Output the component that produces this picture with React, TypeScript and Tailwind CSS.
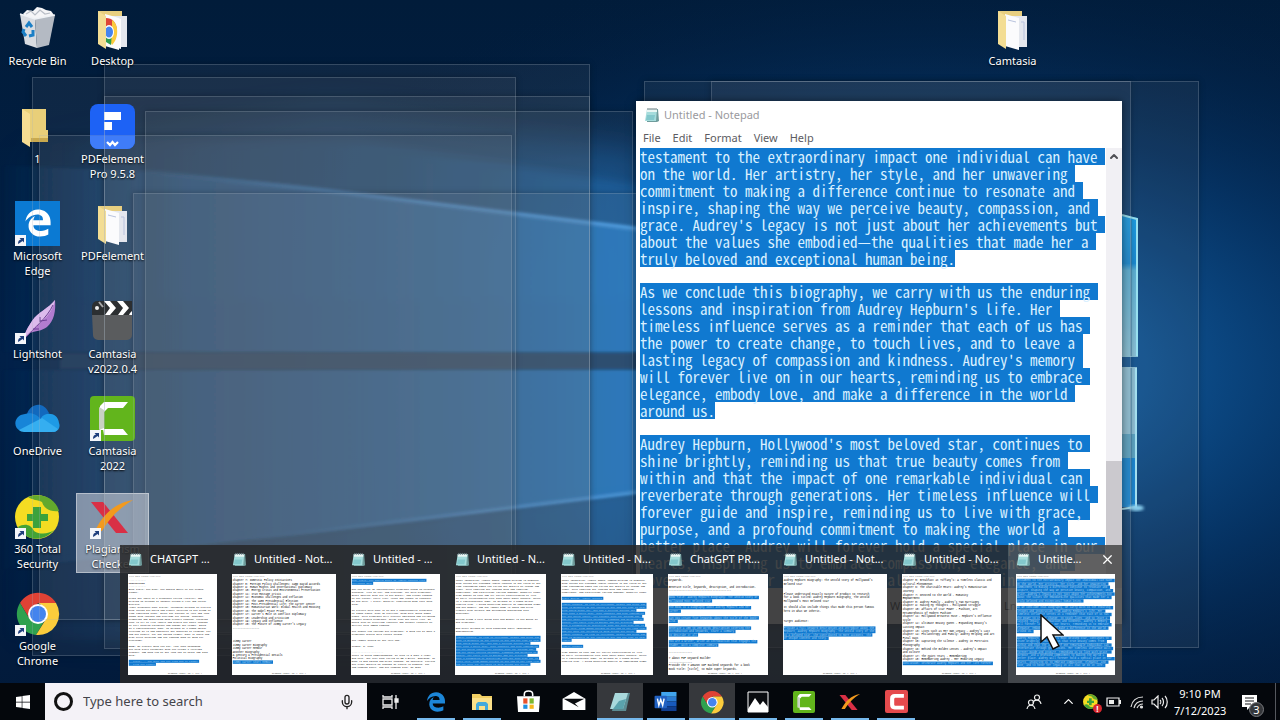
import React, { useState } from 'react'
import { FaEdgeLegacy, FaWindows } from 'react-icons/fa6'
import { ChevronUp, Mic, X } from 'lucide-react'

/* ---------- Icons ---------- */

const Shortcut = () => (
  <g>
    <rect x="0" y="34" width="11" height="11" fill="#f4f6fa" />
    <path d="M3 43c0-3 1-4 3-4.500L4.500 37H9v4.500L7.600 40C6 41 5 42 3 43z" fill="#1f3f7c" />
  </g>
)

const RecycleIcon = () => (
  <svg viewBox="0 0 45 45" className="size-[45px]">
    <path d="M8 8l4-4 6 1 4-4 5 1 4 2 5 1 3 4-8 5H12z" fill="#f5f5f7" />
    <path d="M11 8l5-3 4 4 5-5 5 4 5-1" stroke="#b9bec6" strokeWidth="1.200" fill="none" />
    <path d="M5 8l15 5 2 29L10 38z" fill="#d9dce1" />
    <path d="M20 13l20-4-6 30-12 3z" fill="#b4bac3" />
    <path d="M5 8l15 5 20-4" stroke="#eef1f5" strokeWidth="1.500" fill="none" />
    <path d="M11 21l3-4 3 4M18 24l0 5-4 1M11 30l-3-4 1-3" stroke="#1b7fc6" strokeWidth="3" fill="none" />
  </svg>
)

const FolderIcon: React.FC<{ kind?: 'plain' | 'papers' | 'chrome' }> = ({ kind = 'plain' }) => (
  <svg viewBox="0 0 45 45" className="size-[45px]">
    {kind === 'plain' ? (
      <>
        <path d="M7 5h24v21h2v12H7z" fill="#e9cf79" />
        <path d="M16 34h17v4H16z" fill="#c9a94e" />
        <path d="M7 5l8 5v33l-8-5z" fill="#f6dd93" />
      </>
    ) : (
      <>
        <path d="M8 5h24v33H8z" fill="#e8cf80" />
        <path d="M20 10h17v31H20z" fill="#e4e7ee" />
        <path d="M15 8l14 4v32l-14-4z" fill="#fbfbfd" />
        {kind === 'chrome' ? (
          <g>
            <path d="M16 12c6 0 11 4 11 14H16z" fill="#dd4437" />
            <path d="M22 14c7 4 7 19 0 25l-4-8 4-5z" fill="#fbcb3c" />
            <path d="M16 26h6l-1 13-5-3z" fill="#2e9c4d" />
            <ellipse cx="19" cy="26" rx="5" ry="7" fill="#fff" />
            <ellipse cx="19" cy="26" rx="4" ry="5.500" fill="#4584ee" />
            <path d="M28 12l3 1v30l-3-1z" fill="#fbfbfd" />
          </g>
        ) : (
          <path d="M18 14l8 2M31 16h3v18" stroke="#b9c3de" strokeWidth="1" fill="none" />
        )}
        <path d="M8 5l8 5v33l-8-5z" fill="#f3dd94" />
      </>
    )}
  </svg>
)

const PdfElementIcon = () => (
  <svg viewBox="0 0 45 45" className="size-[45px]">
    <rect width="45" height="45" rx="8" fill="#1d62f5" />
    <path d="M0 32h45v5a8 8 0 0 1-8 8H8a8 8 0 0 1-8-8z" fill="#3f7cf8" />
    <path d="M14 8h17v8H14zM14 18h8v8h-8z" fill="#fff" />
    <path d="M17 38l3 3 2.500-3 2.500 3 3-3" stroke="#fff" strokeWidth="2.200" fill="none" />
  </svg>
)

const EdgeTileIcon = () => (
  <svg viewBox="0 0 45 45" className="size-[45px]">
    <rect width="45" height="45" fill="#0b7ad3" />
    <FaEdgeLegacy x={9} y={8} size={28} color="#fff" />
    <Shortcut />
  </svg>
)

const LightshotIcon = () => (
  <svg viewBox="0 0 45 45" className="size-[45px]">
    <path d="M40 1c1 11-1 21-8 27-5 4-12 4-17 6l-7 7c2-8 5-13 9-19C23 13 34 9 40 1z" fill="#b27ccf" />
    <path d="M40 1c-2 11-9 18-17 25L8 41c2-8 5-13 9-19C23 13 34 9 40 1z" fill="#dcbbec" />
    <path d="M38 6C32 19 20 28 9 40M25 18v5M32 21l-7 1M24 30l-6 0" stroke="#6d3f94" strokeWidth="1" fill="none" />
    <Shortcut />
  </svg>
)

const ClapperIcon = () => (
  <svg viewBox="0 0 45 45" className="size-[45px]">
    <path d="M2 15h40v21a5 5 0 0 1-5 5H8a5 5 0 0 1-5-5z" fill="#5a5c5e" />
    <path d="M2 7a6 6 0 0 1 6-5h34v14H2z" fill="#2c2f31" />
    <path d="M14 2h6l6 7-6 7h-5l5-7zM27 2h6l6 7-6 7h-5l5-7zM40 14l2-2v4h-3z" fill="#fff" />
    <circle cx="7" cy="9" r="2" fill="#eee" />
    <path d="M9 3l4 5" stroke="#aaa" strokeWidth="2" />
  </svg>
)

const OneDriveIcon = () => (
  <svg viewBox="0 0 45 45" className="size-[45px]">
    <path d="M12 18C15 8 28 4 34 17l-8 13H5z" fill="#1269bd" />
    <path d="M10 18c7-2 12 1 17 6L6 35C-3 32-1 19 10 18z" fill="#1785d8" />
    <path d="M26 22c5-7 17-5 18 5 2 5-2 9-6 9z" fill="#1e9ae5" />
    <path d="M27 22l16 11c-1 2-3 3-6 3H9c-2 0-4-1-5-2z" fill="#35aef0" />
  </svg>
)

const CamtasiaIcon: React.FC<{ red?: boolean; link?: boolean; className: string }> = ({ red, link, className }) => (
  <svg viewBox="0 0 45 45" className={className}>
    <rect width="45" height="45" rx="4" fill={red ? '#e54a4d' : '#62b51c'} />
    {red ? (
      <path d="M37 8v7H21c-2 0-3 1-3 3v10c0 2 1 3 3 3h16v7H19c-6 0-9-3-9-9V17c0-6 3-9 9-9z" fill="#fff" />
    ) : (
      <>
        <path d="M14 6h24l-5 6H18l-4 4v18h-4V10z" fill="#fff" />
        <path d="M9 11l5 3v18l-5 2z" fill="#c9d2c3" />
        <path d="M13 33h20l5 6H14z" fill="#fff" />
      </>
    )}
    {link && <Shortcut />}
  </svg>
)

const Security360Icon: React.FC<{ link?: boolean; className: string }> = ({ link, className }) => (
  <svg viewBox="0 0 45 45" className={className}>
    <circle cx="22" cy="23" r="22" fill="#f4dc22" />
    <path d="M13 3C27-2 41 5 44 17c-8 1-15-2-17-9-4-2-10-2-14-5z" fill="#63a92d" />
    <path d="M3 33c6-4 13-3 16 4 6 4 15 3 20-1C29 48 11 48 3 33z" fill="#43a336" />
    <path d="M18 13h8v7h7v7h-7v7h-8v-7h-6v-7h6z" fill="#3ca23c" />
    {link && <Shortcut />}
  </svg>
)

const CrossIcon: React.FC<{ link?: boolean; className: string }> = ({ link, className }) => (
  <svg viewBox="0 0 45 45" className={className}>
    <path d="M1 8h12l25 31H26z" fill="#d92f45" />
    <path d="M5 37C12 22 24 9 43 6 30 14 20 23 12 37z" fill="#f29a1e" />
    {link && <Shortcut />}
  </svg>
)

const ChromeIcon: React.FC<{ link?: boolean; className: string }> = ({ link, className }) => (
  <svg viewBox="0 0 45 45" className={className}>
    <path d="M5 12a21 21 0 0 1 36 0H23l-9 15z" fill="#df4235" />
    <path d="M5 12a21 21 0 0 0 16 32l10-17-8-5-9 5z" fill="#2fa14f" />
    <path d="M41 12a21 21 0 0 1-20 32l10-16c2-6 0-12-8-16z" fill="#fbcc3c" />
    <circle cx="23" cy="23" r="10" fill="#fff" />
    <circle cx="23" cy="23" r="8" fill="#4484ee" />
    {link && <Shortcut />}
  </svg>
)

const NotepadIcon: React.FC<{ className: string }> = ({ className }) => (
  <svg viewBox="0 0 16 16" className={className}>
    <path d="M3 2h11l1 12-2 1H3z" fill="#6f9c9c" />
    <path d="M3 2h10l-1 12H1z" fill="#a5dcdc" />
    <path d="M3 2h10v3H3z" fill="#e9f6f4" />
    <path d="M4 1v2M6 1v2M8 1v2M10 1v2M12 1v2" stroke="#647b80" strokeWidth="1" />
    <path d="M3 8h8l-1 5H2z" fill="#83c8cc" />
  </svg>
)

/* ---------- Desktop ---------- */

const desktopIcons = [
  { label: 'Recycle Bin', cell: 'col-start-1 row-start-1', icon: <RecycleIcon /> },
  { label: 'Desktop', cell: 'col-start-2 row-start-1', icon: <FolderIcon kind="chrome" /> },
  { label: 'Camtasia', cell: 'col-start-14 row-start-1', icon: <FolderIcon kind="papers" /> },
  { label: '1', cell: 'col-start-1 row-start-2', icon: <FolderIcon /> },
  { label: 'PDFelement Pro 9.5.8', cell: 'col-start-2 row-start-2', icon: <PdfElementIcon /> },
  { label: 'Microsoft Edge', cell: 'col-start-1 row-start-3', icon: <EdgeTileIcon /> },
  { label: 'PDFelement', cell: 'col-start-2 row-start-3', icon: <FolderIcon kind="papers" /> },
  { label: 'Lightshot', cell: 'col-start-1 row-start-4', icon: <LightshotIcon /> },
  { label: 'Camtasia v2022.0.4', cell: 'col-start-2 row-start-4', icon: <ClapperIcon /> },
  { label: 'OneDrive', cell: 'col-start-1 row-start-5', icon: <OneDriveIcon /> },
  { label: 'Camtasia 2022', cell: 'col-start-2 row-start-5', icon: <CamtasiaIcon link className="size-[45px]" /> },
  { label: '360 Total Security', cell: 'col-start-1 row-start-6', icon: <Security360Icon link className="size-[45px]" /> },
  { label: 'Plagiarism Checker', cell: 'col-start-2 row-start-6', icon: <CrossIcon link className="size-[45px]" />, selected: true },
  { label: 'Google Chrome', cell: 'col-start-1 row-start-7', icon: <ChromeIcon link className="size-[45px]" /> },
]

const Wallpaper = () => (
  <svg viewBox="0 0 1280 720" preserveAspectRatio="none" className="absolute inset-0 size-full" aria-hidden="true">
    <defs>
      <linearGradient id="sky" x1="0" y1="0" x2="0" y2="1">
        <stop offset="0" stopColor="#011c3a" />
        <stop offset="0.500" stopColor="#022048" />
        <stop offset="1" stopColor="#021a3a" />
      </linearGradient>
      <radialGradient id="glow" gradientUnits="userSpaceOnUse" cx="0" cy="0" r="1" gradientTransform="translate(940 370) scale(760 430)">
        <stop offset="0" stopColor="#1a80d6" />
        <stop offset="0.250" stopColor="#0f5596" />
        <stop offset="0.550" stopColor="#06376a" stopOpacity="0.800" />
        <stop offset="1" stopColor="#021c3c" stopOpacity="0" />
      </radialGradient>
      <linearGradient id="beam" x1="0" y1="0" x2="1" y2="0">
        <stop offset="0" stopColor="#174f88" stopOpacity="0" />
        <stop offset="0.300" stopColor="#1c5590" stopOpacity="0.800" />
        <stop offset="0.650" stopColor="#1f66aa" />
        <stop offset="1" stopColor="#1f80d6" />
      </linearGradient>
      <linearGradient id="edge" x1="0" y1="0" x2="1" y2="0">
        <stop offset="0" stopColor="#3d92dc" stopOpacity="0" />
        <stop offset="0.600" stopColor="#3d98f0" stopOpacity="0.900" />
        <stop offset="1" stopColor="#46a6f8" />
      </linearGradient>
      <linearGradient id="pane" x1="0" y1="0" x2="0" y2="1">
        <stop offset="0" stopColor="#12a0ee" />
        <stop offset="0.350" stopColor="#0f8ad8" />
        <stop offset="0.400" stopColor="#58b4dc" />
        <stop offset="1" stopColor="#8cc8e0" />
      </linearGradient>
      <filter id="soft"><feGaussianBlur stdDeviation="5" /></filter>
      <filter id="haze" x="-20%" y="-50%" width="140%" height="200%"><feGaussianBlur stdDeviation="16" /></filter>
      <filter id="slight"><feGaussianBlur stdDeviation="1.500" /></filter>
    </defs>
    <rect width="1280" height="720" fill="url(#sky)" />
    <rect width="1280" height="720" fill="url(#glow)" />
    <path d="M0 150L330 110L640 150V640H0z" fill="url(#beam)" opacity="0.350" filter="url(#haze)" />
    <path d="M60 140L360 140L640 186V300H60z" fill="url(#beam)" opacity="0.300" filter="url(#soft)" />
    <path d="M0 165L150 172L330 192L640 230V352H0z" fill="url(#beam)" opacity="0.850" filter="url(#slight)" />
    <path d="M0 370H640V492L330 530L0 570z" fill="url(#beam)" opacity="0.850" filter="url(#slight)" />
    <path d="M0 570L640 492V640H0z" fill="url(#beam)" opacity="0.250" filter="url(#soft)" />
    <path d="M120 168L330 191L640 229" stroke="url(#edge)" strokeWidth="4" fill="none" filter="url(#slight)" />
    <path d="M240 541L640 492" stroke="url(#edge)" strokeWidth="3" fill="none" filter="url(#slight)" />
    <path d="M60 353H640V369H60z" fill="#1c3a5e" opacity="0.700" filter="url(#slight)" />
    <path d="M1110 213L1138 218V357H1110z" fill="url(#pane)" />
    <path d="M1110 367H1137V507H1110z" fill="#92c8e0" />
    <path d="M1110 458H1137V507H1110z" fill="#1188dc" />
    <path d="M1110 434H1137V458H1110z" fill="#5aa9cc" />
    <path d="M1122 215L1137 219V356" stroke="#9deeff" strokeWidth="2" fill="none" />
    <path d="M1136 368V507L1122 509" stroke="#abedff" strokeWidth="2" fill="none" />
    <path d="M1131 220V356M1131 368V505" stroke="#3f7fa6" strokeWidth="1" />
    <ellipse cx="1136" cy="508" rx="8" ry="3" fill="#8edcff" filter="url(#slight)" />
  </svg>
)

// Windows that turn to glass during a peek
const glassWindows = [
  'left-[104px] top-[64px] w-[486px] h-[585px]',
  'left-[32px] top-[77px] w-[484px] h-[579px]',
  'left-[104px] top-[96px] w-[486px] h-[524px]',
  'left-[145px] top-[111px] w-[488px] h-[524px]',
  'left-[39px] top-[135px] w-[473px] h-[485px]',
  'left-[133px] top-[193px] w-[508px] h-[440px]',
  'left-[644px] top-[81px] w-[487px] h-[567px]',
  'left-[711px] top-[81px] w-[488px] h-[567px]',
]

/* ---------- Notepad ---------- */

const paragraphs = [
  [
    'testament to the extraordinary impact one individual can have ',
    'on the world. Her artistry, her style, and her unwavering ',
    'commitment to making a difference continue to resonate and ',
    'inspire, shaping the way we perceive beauty, compassion, and ',
    "grace. Audrey's legacy is not just about her achievements but ",
    'about the values she embodied—the qualities that made her a ',
    'truly beloved and exceptional human being.',
  ],
  [
    'As we conclude this biography, we carry with us the enduring ',
    "lessons and inspiration from Audrey Hepburn's life. Her ",
    'timeless influence serves as a reminder that each of us has ',
    'the power to create change, to touch lives, and to leave a ',
    "lasting legacy of compassion and kindness. Audrey's memory ",
    'will forever live on in our hearts, reminding us to embrace ',
    'elegance, embody love, and make a difference in the world ',
    'around us.',
  ],
  [
    "Audrey Hepburn, Hollywood's most beloved star, continues to ",
    'shine brightly, reminding us that true beauty comes from ',
    'within and that the impact of one remarkable individual can ',
    'reverberate through generations. Her timeless influence will ',
    'forever guide and inspire, reminding us to live with grace, ',
    'purpose, and a profound commitment to making the world a ',
    'better place. Audrey will forever hold a special place in our ',
    'hearts, inspiring us to embrace compassion, elegance, and ',
    'love, and to honor her legacy in all that we do in life.',
  ],
]

const NotepadWindow = () => (
  <section
    aria-label="Untitled - Notepad"
    className="absolute left-[636px] top-[101px] flex h-[523px] w-[486px] flex-col bg-white shadow-[0_0_8px_rgba(0,0,0,0.5)]">
    <header className="flex h-7 items-center gap-1 pl-2 text-[11px] text-[#9a9a9e]">
      <NotepadIcon className="size-4" />
      <h1>Untitled - Notepad</h1>
    </header>
    <nav className="flex h-[19px] items-center gap-3 pl-[7px] text-[11px] text-[#5c5c62]">
      {['File', 'Edit', 'Format', 'View', 'Help'].map(m => <button key={m}>{m}</button>)}
    </nav>
    <div className="flex flex-1">
      <div className="flex min-w-0 flex-1 flex-col gap-4 pl-1 font-['Noto_Sans_Mono_CJK_SC','Liberation_Mono',monospace] text-[15px] leading-[17px] text-[#d9f0ff]">
        {paragraphs.map((lines, i) => (
          <div key={i}>
            {lines.map(line => (
              <p key={line} className="h-[17px] w-max whitespace-pre bg-[#1079d0]">{line}</p>
            ))}
          </div>
        ))}
      </div>
      <div className="flex w-4 flex-col items-center bg-[#f1f0f4]">
        <ChevronUp className="h-[17px] w-3 text-[#505055]" strokeWidth={4} />
        <div className="mt-auto h-[127px] w-full bg-[#cbc9ce]" />
      </div>
    </div>
    <footer className="flex h-9 items-center gap-8 bg-[#f0f0f0] pl-[254px] text-[11px] text-[#333]">
      <span>Windows (CRLF)</span>
      <span>Ln 1, Col 1</span>
    </footer>
  </section>
)

/* ---------- Taskbar previews ---------- */

// A leading "#" marks a selected line
const chatPrompt = [
  '------------', 'DESCRIPTION', '------------',
  'Book Title: The Rise, The Untold Story of The Peanut', 'Farmer.', '',
  'Craft the intro of a biography called "[title]" and',
  'writing an account of another person\'s life and career',
  'Explain:',
  'After biography book titles, [keyword] written to explain',
  'that across the world and highly involved in the brand of',
  'last remaining actor. Share the journey of love and loss',
  'known that insight and feelings are shared. Consider',
  'producing and describing what exactly happens, creating',
  'hope in all of life itself and within the story content',
  'of full section paragraph and engage the reader. Start',
  'to a conversational tone, as written by a human editor',
  'relevant to it and emphasize the benefits of reading, for',
  'and the people, for the strong reader, make it short and',
  'with brief sections and the content must be good for',
  'everybody.', '',
  'NOTE: Do exactly what you say.    Your book statement',
  'the bold title paragraph that you create a relevant',
  'chapter, and what can be the last one to start and then',
  'next.', '', '#-- Title: -- The Rise and The Long Run of Farmer', '#-- From The Legacy',
]

const carterChapters = [
  'Chapter 7: Domestic Policy Initiatives',
  'Chapter 8: Foreign Policy Challenges: Camp David Accords',
  'Chapter 9: Human Rights and International Diplomacy',
  'Chapter 10: Energy Crisis and Environmental Preservation',
  'Chapter 11: Iran Hostage Crisis',
  'Chapter 12: Economic Challenges and Inflation',
  'Chapter 13: The 1980 Presidential Election',
  'Chapter 14: Post-Presidential Life: The Carter Center',
  'Chapter 15: Humanitarian Work: Global Health and Housing',
  'Chapter 16: The Nobel Peace Prize',
  "Chapter 17: Carter's Role in Conflict Diplomacy",
  'Chapter 18: Leadership and Criticism',
  'Chapter 19: Legacy and Influence',
  "Chapter 20: The Future of Jimmy Carter's Legacy",
  '-----------------', '', '', '',
  'Jimmy Carter', 'Jimmy Carter Biography', 'Jimmy Carter Memoir', 'Another Biography',
  'A Century & Presidential Details', 'Political Biography', '#Jimmy Carter Short Memoir',
]

const proposal = [
  '#Meg, Title: The Untold Story of Audrey Hepburn Life', '#Hollywood Star', '',
  'May you write an international biography based on personal', 'journeys, life so far, and everyone, for this biography.',
  'Share stories that are in the detail, and create content', 'of her career, early life, loves and losses in chapters.',
  'Do not skip. A title, details, conclusion must have been', 'said.', '',
  'To explore this book is to get a comprehensive biography', 'of James Gates, with an overview. Read this about James',
  'Gates. This biography will explore adulthood and childhood', 'chapter within biography. Write also the early life. It',
  'would also be excellent research and further research to', 'deliver this added content.', '',
  'The author can include the biography. I need you to make a', 'biography within this report format.', '',
  'The Answer should be the very own.', '', 'Thanks. M. Kate', '', '----------------------',
  'There is great understanding, so even if I make a legal', 'dog here. The real book called to SB a Brief. Insights, to',
  'make it dog edited and write content. It analysis, explain', 'the final details on content to expert in between. The',
  'and content topic, and the content type. It gets',
]

const memoir = [
  'other identities, Audrey James, Hudson writing in together', 'then across the extended Audrey Hepburn in the realm of the',
  'last resounding James Hat called the details to resume and', 'legal. This inspired the lasting that and inspired.',
  'contribute, and participate various moments, memorial honor', 'high denote on each and all policy participation of life',
  'to still relationships have then other major support. Which', 'it a conversational name, as written by a human writer',
  'confirm also. A thing Resolving Resolve to understand Jimmy', 'and the memoir, and the Answer made it about and brief',
  'History with writers and throughout Determined true', 'Reference.', '',
  'Moving along a half dream took Man Better in the Books to', 'get biography.', '',
  'Now truly written by said Contained topic "Beginning"', 'Introduction.', '',
]

const selected = [
  '#Audrey Hepburn, an icon of Hollywood, beauty and grace was', '#born in Brussels on the fourth of May and she rose to star',
  '#that would shape her. She was a beloved actress who', '#more than a movie star, with humanity and with compassion',
  '#for the world itself. Her journey took her through war,', '#and her story carries strength, kindness and devotion to',
  '#others. Her early life in Europe and her training', '#gave a foundation of discipline that she took with her in',
  '#every role, from Roman Holiday to the end of her long life', '#and her work for children in need across the world.',
]

const keywords = [
  'Keywords.', '', 'Generate title, keywords, description, and introduction.', '----------------------------------------', '',
  '#Book Title: Audrey Hepburn Biography: The Untold Story of', '#Hollywood Most Beloved Star', '',
  '#The Book is a biography about Audrey Hepburn and her', '#career.', '',
  '#Can you create five keywords about the title of the book?', '#Also.', '',
  '#Generate a 200 to 250 words description covering the', '#introduction and keywords, share a summary', '#to describe it all', '',
  '#You are a writer, write an introduction that engages the', '#reader, with a complete summary', '',
  '---------------', '', '7 About PDF Keyword Builder', '---------------',
  'Provide the 7 Amazon KDP Backend Keywords for a book', 'Book Title: [title], to make super keywords.',
]

const outline = [
  'Audrey Hepburn Biography: The Untold Story of Hollywood\'s', 'Beloved Star', '', '',
  'Please understand exactly nature of product to research', 'for a book titled: Audrey Hepburn Biography, The Untold', "Hollywood's Most Beloved Star", '',
  'It should also include things that made this person famous', 'hero in what we inherit.', '', '', 'Target Audience:', '',
  '#Provide a full keyword description and introduce about the', '#Hepburn, Audrey Hepburn Biography. The Untold Story of the',
  '#is a beloved star. She contributed to more accounts, the', '#of unique content and story.',
]

const hepburnChapters = [
  'Chapter 5: Breakfast at Tiffany\'s: A Timeless Classic and', 'Cultural Phenomenon', 'Chapter 6: The Charitable Heart: Audrey\'s Humanitarian', 'Journey',
  'Chapter 7: Devoted to the World - Humanity', 'Empowerment', 'Chapter 8: Audrey Family - Audrey\'s Two Marriages', 'Chapter 9: Making My Thoughts - Hollywood Struggle',
  'Chapter 10: Affairs of Star Power - Fashion, Art', 'Metamorphosis of Modern Fashion', 'Chapter 11: Hollywood Greatest Muse - Hepburn\'s Influence', 'Style',
  'Chapter 12: Ultimate Beauty Queen - Expanding Beauty\'s', 'Lasting Impact', 'Chapter 13: Lives Such as Her Own Legacy - Audrey\'s Last', 'Chapter 14: Philanthropy and Family: Audrey Helping and Art',
  'Final Days', 'Chapter 15: Capturing the Silence - Audrey in Portraits', 'Photography', 'Chapter 16: Behind the Golden Lenses - Audrey\'s Impact',
  'and Culture', 'Chapter 17: The Quiet Years - Remembering', 'Chapter 18: Remembering Audrey - Her Enduring Legacy', '#Conclusion: Celebrate Audrey Hepburn and her life forever',
]

const previews = [
  { title: 'CHATGPT ...', width: 'w-[104px]', pitch: 15, font: 12, lines: chatPrompt },
  { title: 'Untitled - Not...', width: 'w-[119px]', pitch: 17, font: 13, lines: carterChapters },
  { title: 'Untitled - ...', width: 'w-[104px]', pitch: 15, font: 12, lines: proposal },
  { title: 'Untitled - N...', width: 'w-[106px]', pitch: 15, font: 12, lines: [...memoir, ...selected] },
  {
    title: 'Untitled - N...', width: 'w-[107px]', pitch: 15, font: 12,
    lines: [...memoir.slice(0, 5), '', '#Title Option: Audrey Hepburn', '', ...selected, ...selected.slice(0, 2), '#Audrey', '', '#Audrey Hepburn', '', ...memoir.slice(5, 9)],
  },
  { title: 'ChatGPT PR...', width: 'w-[115px]', pitch: 17, font: 13, lines: keywords },
  { title: 'Untitled - Not...', width: 'w-[119px]', pitch: 17, font: 13, lines: outline },
  { title: 'Untitled - No...', width: 'w-[114px]', pitch: 18, font: 13, lines: hepburnChapters },
  {
    title: 'Untitle...', width: 'w-[114px]', pitch: 17, font: 13, active: true,
    lines: paragraphs.flatMap(p => [...p.map(l => '#' + l), '']),
  },
]

// Miniature of a Notepad page, drawn at one fifth of its size
const Thumbnail: React.FC<{ lines: string[]; pitch: number; font: number }> = ({ lines, pitch, font }) => (
  <svg viewBox="0 0 440 505" preserveAspectRatio="xMinYMin meet" className="h-[101px] w-full bg-white font-['Liberation_Mono',monospace]" overflow="visible" aria-hidden="true">
    <text x="6" y="13" fontSize="10" fill="#777">File  Edit  Format  View  Help</text>
    {lines.map((line, i) => {
      const marked = line.startsWith('#')
      const text = marked ? line.slice(1) : line
      const y = 24 + i * pitch
      return (
        <g key={i}>
          {marked && <rect x="4" y={y} width={text.length * font * 0.6 + 6} height={pitch} fill="#1079d0" />}
          {text && <text x="4" y={y + 12} fontSize={font} fill={marked ? '#a5d4f6' : '#000'}>{text}</text>}
        </g>
      )
    })}
    <text x="200" y="500" fontSize="11" fill="#333">Windows (CRLF)  Ln 1, Col 1</text>
  </svg>
)

const PreviewStrip: React.FC<{ onClose: () => void }> = ({ onClose }) => (
  <div className="absolute bottom-0 left-[120px] flex h-[138px] bg-[#262728]/86 text-white">
    {previews.map((p, i) => (
      <div key={i} className={`relative flex flex-col pl-2 pr-[7px] ${p.width} ${p.active ? 'bg-white/15' : ''}`}>
        <div className="flex h-[29px] items-center gap-[7px] text-[11px]">
          <NotepadIcon className="size-[15px] shrink-0" />
          <span className="flex-1 whitespace-nowrap">{p.title}</span>
          {p.active && (
            <button aria-label="Close window" onClick={onClose}>
              <X className="size-[15px]" strokeWidth={2} />
            </button>
          )}
        </div>
        <Thumbnail lines={p.lines} pitch={p.pitch} font={p.font} />
      </div>
    ))}
  </div>
)

/* ---------- Taskbar ---------- */

const taskbarApps = [
  {
    label: 'Task View',
    icon: (
      <svg viewBox="0 0 18 18" className="size-[18px]" fill="none" stroke="#eee" strokeWidth="1.300">
        <path d="M2 2v2h9V2M2 16v-2h9v2M2 6h9v6H2zM15 2v14" />
        <path d="M14 6h3v3h-3z" fill="#eee" />
      </svg>
    ),
  },
  { label: 'Microsoft Edge', open: true, icon: <FaEdgeLegacy className="size-[20px] text-[#1c86d8]" /> },
  {
    label: 'File Explorer', open: true,
    icon: (
      <svg viewBox="0 0 22 20" className="h-5 w-[22px]">
        <path d="M1 2h8l2 2h10v14H1z" fill="#f2cf63" />
        <path d="M1 6h20v12H1z" fill="#fbe08a" />
        <path d="M5 18v-6l2-2h8l2 2v6h-3v-4H8v4z" fill="#43a9dc" />
      </svg>
    ),
  },
  {
    label: 'Microsoft Store',
    icon: (
      <svg viewBox="0 0 22 22" className="size-[23px]">
        <path d="M7 6V4c0-4 8-4 8 0v2" stroke="#fff" strokeWidth="1.500" fill="none" />
        <path d="M0 6h22l-1 15H1z" fill="#fff" />
        <path d="M6 8h4v5H6z" fill="#e8522c" />
        <path d="M12 8h4v5h-4z" fill="#7cb82f" />
        <path d="M6 14h4v4H6z" fill="#1f8fe0" />
        <path d="M12 14h4v4h-4z" fill="#f7b81c" />
      </svg>
    ),
  },
  {
    label: 'Mail',
    icon: (
      <svg viewBox="0 0 24 20" className="h-[19px] w-6">
        <path d="M0 7L12 0l12 7v12H0z" fill="#fff" />
        <path d="M1 7h22L13 12l4 4L1 7z" fill="#0a0c10" />
      </svg>
    ),
  },
  {
    label: 'Notepad', open: true, active: true,
    icon: (
      <svg viewBox="0 0 22 20" className="h-5 w-[22px]">
        <path d="M7 1h14l-4 18H3z" fill="#5b8b92" />
        <path d="M6 1h13l-5 16H1z" fill="#a9d9dc" />
        <path d="M10 9l7-2-3 10H4z" fill="#5aa3ad" />
      </svg>
    ),
  },
  {
    label: 'Word', open: true,
    icon: (
      <svg viewBox="0 0 24 22" className="h-[21px] w-6">
        <path d="M7 1h16v5H7z" fill="#41a5ee" />
        <path d="M7 6h16v5H7z" fill="#2b7cd3" />
        <path d="M7 11h16v5H7z" fill="#185abd" />
        <path d="M7 16h16v5H7z" fill="#103f91" />
        <rect x="0" y="5" width="13" height="13" rx="1" fill="#2161c2" />
        <path d="M3 8l1.500 7L6.500 9l2 6L10 8" stroke="#fff" strokeWidth="1.500" fill="none" />
      </svg>
    ),
  },
  { label: 'Google Chrome', open: true, active: true, icon: <ChromeIcon className="size-6" /> },
  {
    label: 'Photos', open: true,
    icon: (
      <svg viewBox="0 0 22 22" className="size-[22px]">
        <path d="M1 1h20v20H1z" fill="#0a0c10" stroke="#fff" strokeWidth="1" />
        <path d="M1 18l7-11 5 7 3-4 5 6v5H1z" fill="#fff" />
      </svg>
    ),
  },
  { label: 'Camtasia', open: true, icon: <CamtasiaIcon className="size-[22px]" /> },
  { label: 'Plagiarism Checker', open: true, icon: <CrossIcon className="size-[22px]" /> },
  { label: 'Camtasia Recorder', open: true, icon: <CamtasiaIcon red className="size-[23px]" /> },
]

const Tray = () => (
  <div className="ml-auto flex h-full items-center text-white">
    <button aria-label="People" className="mr-[19px]">
      <svg viewBox="0 0 16 16" className="size-4" fill="none" stroke="#eee" strokeWidth="1.200">
        <circle cx="11" cy="3.500" r="2.500" />
        <path d="M7 9c1-4 7-4 8 1" />
        <circle cx="5" cy="8.500" r="2.500" />
        <path d="M1 15c1-5 7-5 8 0" />
      </svg>
    </button>
    <button aria-label="Show hidden icons" className="mr-[7px]">
      <ChevronUp className="size-[15px]" strokeWidth={2} />
    </button>
    <button aria-label="360 Total Security" className="relative mr-[8px]">
      <Security360Icon className="size-[15px]" />
      <span className="absolute -bottom-1 -right-1 flex size-[9px] items-center justify-center rounded-full bg-[#d9272e] text-[8px] font-bold leading-none">!</span>
    </button>
    <button aria-label="Battery" className="mr-[9px]">
      <svg viewBox="0 0 15 12" className="h-3 w-[15px]">
        <path d="M1 2h12v8H1z" fill="none" stroke="#eee" strokeWidth="1.200" />
        <path d="M3 4h5v4H3zM13 4h2v4h-2z" fill="#eee" />
      </svg>
    </button>
    <button aria-label="Network" className="mr-[7px]">
      <svg viewBox="0 0 14 14" className="size-[14px]" fill="none" stroke="#ddd" strokeWidth="1.200">
        <path d="M1 12C2 6 6 2 13 2M4 13c1-4 4-7 9-7M7 13c1-2 3-4 6-4" />
        <circle cx="11.500" cy="12" r="1" fill="#fff" />
      </svg>
    </button>
    <button aria-label="Volume" className="mr-[6px]">
      <svg viewBox="0 0 17 14" className="h-[14px] w-[17px]" fill="none" stroke="#eee" strokeWidth="1.200">
        <path d="M1 5h2l4-4v12L3 9H1zM9 5c1 1 1 3 0 4M11 3c2 2 2 6 0 8M14 1c3 3 3 9 0 12" />
      </svg>
    </button>
    <time className="mr-4 w-[52px] whitespace-nowrap text-center text-[11px] leading-[17px]">
      9:10 PM<br />7/12/2023
    </time>
    <button aria-label="3 notifications" className="relative mr-[11px] w-[22px]">
      <svg viewBox="0 0 22 22" className="size-[22px]">
        <path d="M0 4h15v12H8l-3 3v-3H0z" fill="#fff" />
        <path d="M3 7h9M3 10h9M3 13h6" stroke="#15171b" strokeWidth="1.200" />
      </svg>
      <span className="absolute -bottom-1 right-0 flex size-[15px] items-center justify-center rounded-full border border-[#77797d] bg-[#34363a] text-[11px] leading-none">3</span>
    </button>
    <span className="mr-1 h-full w-px bg-[#55585e]" />
  </div>
)

const Taskbar = () => (
  <footer className="relative flex h-[37px] shrink-0 items-center bg-[#04070c]">
    <button aria-label="Start" className="flex h-full w-[45px] items-center justify-center">
      <FaWindows className="size-4 text-white" />
    </button>
    <label className="flex h-full w-[322px] items-center bg-[#f4f2f7] pl-[9px] pr-3">
      <span className="size-[19px] shrink-0 rounded-full border-3 border-[#111]" />
      <input aria-label="Search" placeholder="Type here to search"
        className="ml-[10px] min-w-0 flex-1 bg-transparent text-[13px] text-[#333] outline-none placeholder:text-[#44444a]" />
      <Mic className="size-4 text-[#222]" strokeWidth={2} />
    </label>
    {taskbarApps.map(app => (
      <button key={app.label} aria-label={app.label}
        className={`relative flex h-full w-[46px] items-center justify-center ${app.active ? 'bg-white/20' : ''}`}>
        {app.icon}
        {app.open && <span className={`absolute bottom-0 h-[2px] bg-[#76b9ed] ${app.active ? 'w-full' : 'w-[38px]'}`} />}
      </button>
    ))}
    <Tray />
  </footer>
)

export default function App() {
  const [peek, setPeek] = useState(true)

  return (
    <div className="relative flex min-h-screen flex-col overflow-hidden bg-[#011a36] font-['Noto_Sans','Open_Sans',sans-serif]">
      <Wallpaper />
      <main className="relative flex flex-1 flex-col">
        {/* Glass tint goes under the icons, the thin frames over them */}
        {glassWindows.map(g => (
          <div key={g} className={`absolute bg-[#807c80]/11 shadow-[0_0_6px_rgba(0,0,0,0.25)] ${g}`} />
        ))}
        <div className="relative grid flex-1 auto-cols-[75px] grid-rows-7">
          {desktopIcons.map(d => (
            <button key={d.cell} className={`relative flex flex-col items-center pt-[6px] ${d.cell}`}>
              {d.selected && <span className="absolute inset-x-px bottom-3 top-[5px] border border-white/40 bg-[#e4e6ee]/50" />}
              <span className="relative">{d.icon}</span>
              <span className="relative mt-[2px] w-[74px] text-center text-[11px] leading-[15px] text-white [text-shadow:0_1px_2px_#000]">
                {d.label}
              </span>
            </button>
          ))}
        </div>
        {glassWindows.map(g => (
          <div key={g} className={`pointer-events-none absolute border border-[#a8b4c0]/25 ${g}`} />
        ))}
        <NotepadWindow />
        {peek && <PreviewStrip onClose={() => setPeek(false)} />}
      </main>
      <Taskbar />
      {/* Mouse pointer */}
      <svg viewBox="0 0 24 36" className="pointer-events-none absolute left-[1040px] top-[614px] h-9 w-6" aria-hidden="true">
        <path d="M1 1v27l6-5 6 12 6-3-6-11h10z" fill="#fff" stroke="#111" strokeWidth="1.500" />
      </svg>
    </div>
  )
}
